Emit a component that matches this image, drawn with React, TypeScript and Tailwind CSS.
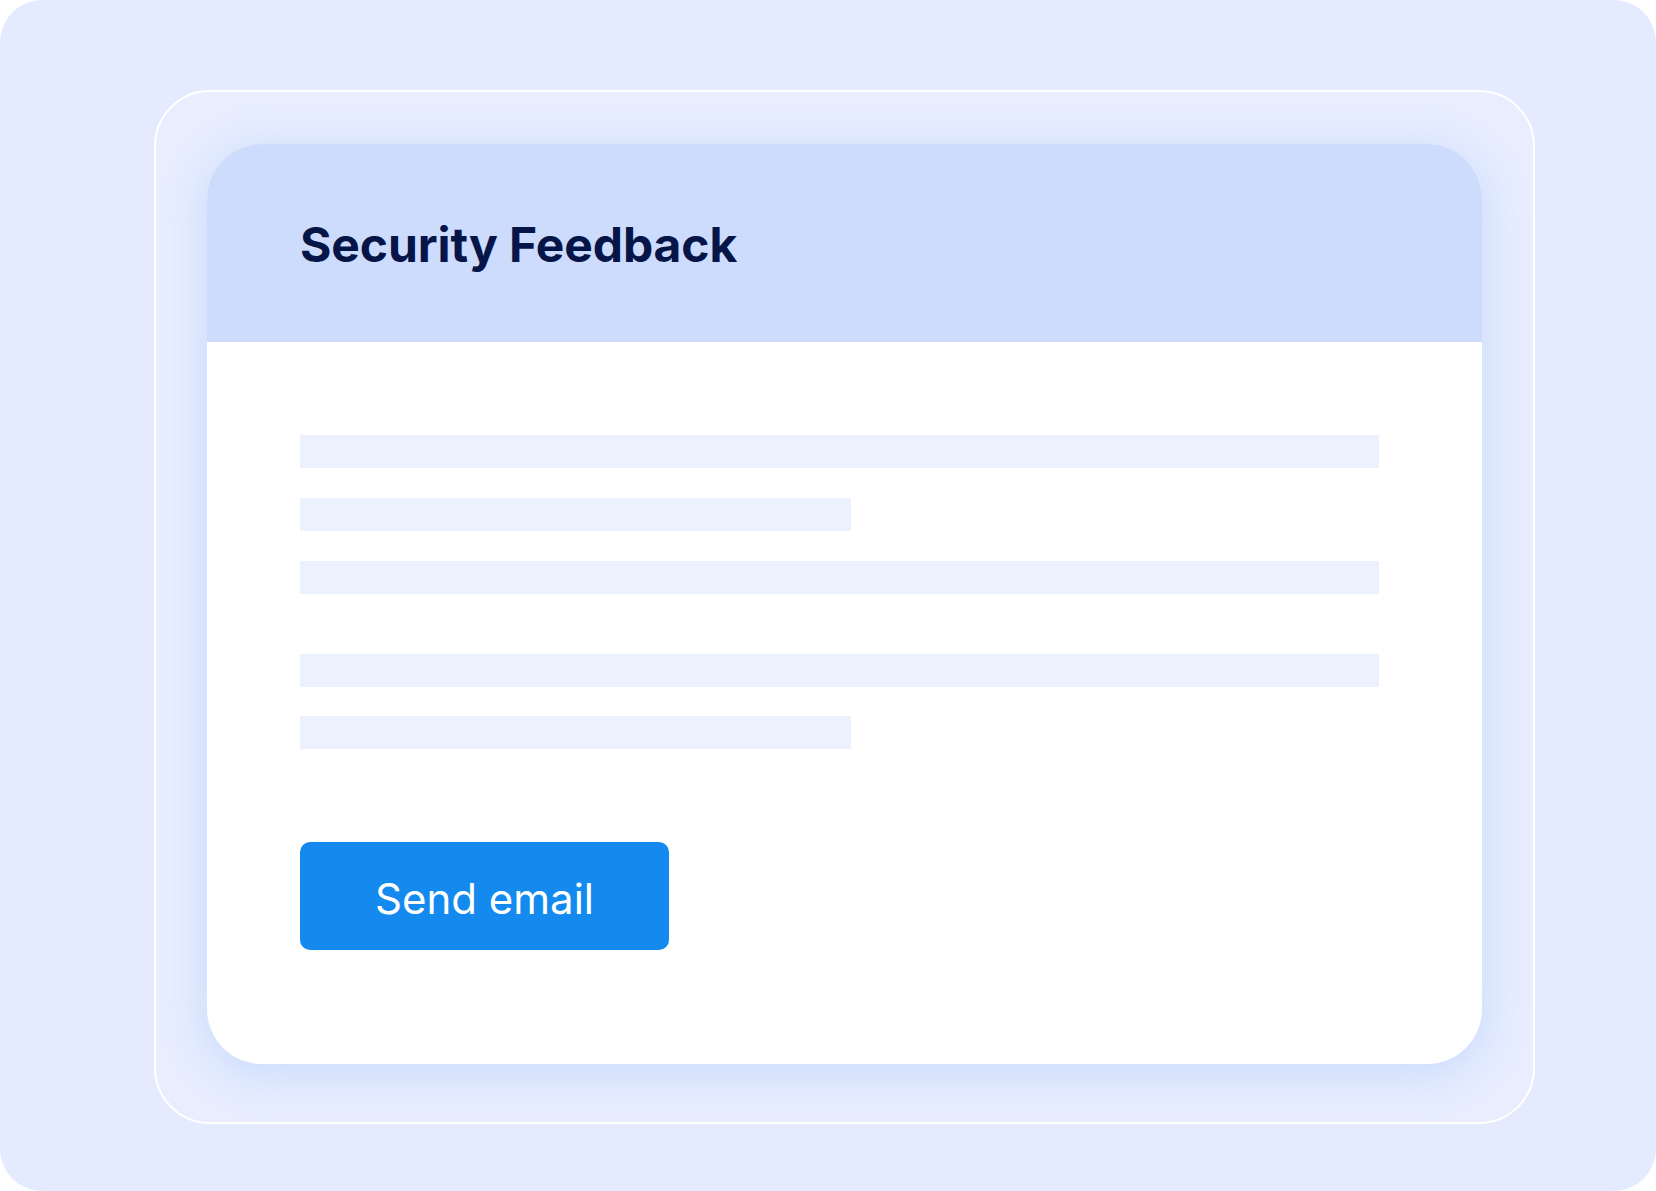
const font = { fontFamily: "Inter, 'Noto Sans', sans-serif" };

function Bar({ short }: { short?: boolean }) {
  return <div className={`h-[33px] bg-[#ebf2fd] ${short ? "w-[551px]" : "w-[1079px]"}`} />;
}

export default function App() {
  return (
    <div className="w-[1656px] h-[1191px] bg-[#e4ebfe] rounded-[42px] overflow-hidden pl-[154px] pt-[90px]" style={font}>
      <div className="w-[1381px] h-[1034px] rounded-[56px] border-2 border-white bg-[#e8eefe] pt-[52px] pl-[51px]">
        <div className="w-[1275px] h-[920px] rounded-[55px] bg-white overflow-hidden flex flex-col shadow-[0_8px_44px_6px_rgba(203,219,253,0.95)]">
          <div className="h-[198px] bg-[#cddbfc] flex items-center pl-[93px] pt-[3px]">
            <h1 className="text-[48px] font-bold text-[#061548] tracking-[-0.1px] leading-none">Security Feedback</h1>
          </div>
          <div className="pl-[93px] pt-[93px] flex flex-col">
            <div className="flex flex-col gap-[30px]">
              <Bar />
              <Bar short />
              <Bar />
            </div>
            <div className="flex flex-col gap-[29px] mt-[60px]">
              <Bar />
              <Bar short />
            </div>
            <button className="mt-[93px] w-[369px] h-[108px] rounded-[10px] bg-[#148aee] text-white text-[42px] pt-[5px] flex items-center justify-center">
              Send email
            </button>
          </div>
        </div>
      </div>
    </div>
  );
}
